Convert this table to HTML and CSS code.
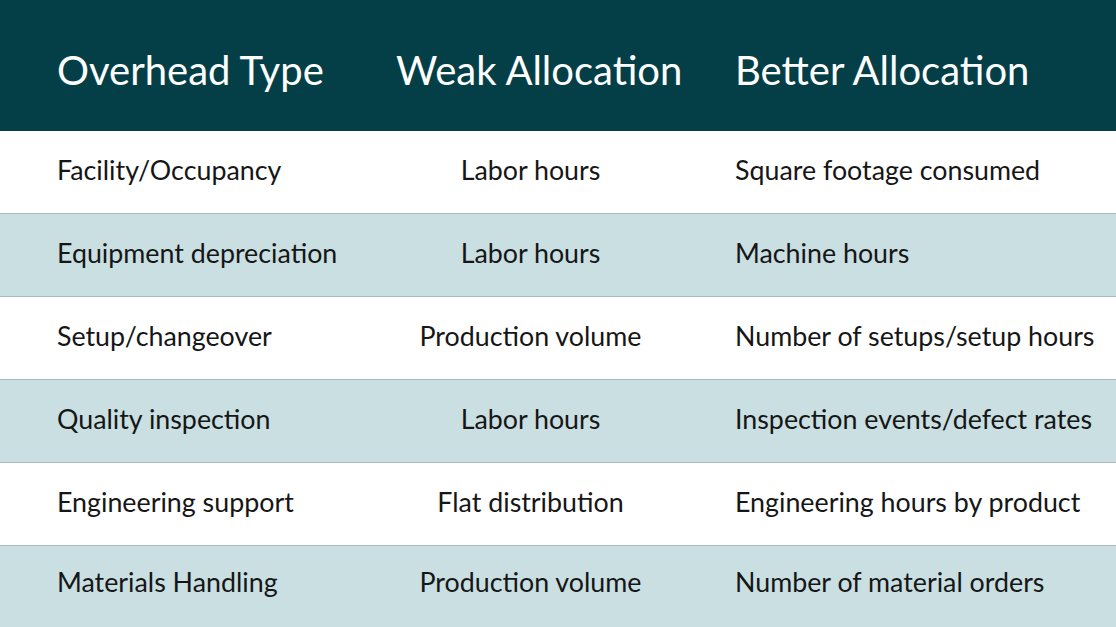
FILE: index.html
```html
<!DOCTYPE html>
<html lang="en">
<head>
<meta charset="utf-8">
<title>Overhead Allocation</title>
<link rel="stylesheet" href="styles.css">
</head>
<body>
<div class="table">
  <div class="row head">
    <div class="cell c1">Overhead Type</div>
    <div class="cell c2">Weak Allocation</div>
    <div class="cell c3">Better Allocation</div>
  </div>
  <div class="row">
    <div class="cell c1">Facility/Occupancy</div>
    <div class="cell c2">Labor hours</div>
    <div class="cell c3">Square footage consumed</div>
  </div>
  <div class="row alt">
    <div class="cell c1">Equipment depreciation</div>
    <div class="cell c2">Labor hours</div>
    <div class="cell c3">Machine hours</div>
  </div>
  <div class="row">
    <div class="cell c1">Setup/changeover</div>
    <div class="cell c2">Production volume</div>
    <div class="cell c3">Number of setups/setup hours</div>
  </div>
  <div class="row alt">
    <div class="cell c1">Quality inspection</div>
    <div class="cell c2">Labor hours</div>
    <div class="cell c3">Inspection events/defect rates</div>
  </div>
  <div class="row">
    <div class="cell c1">Engineering support</div>
    <div class="cell c2">Flat distribution</div>
    <div class="cell c3">Engineering hours by product</div>
  </div>
  <div class="row alt last">
    <div class="cell c1">Materials Handling</div>
    <div class="cell c2">Production volume</div>
    <div class="cell c3">Number of material orders</div>
  </div>
</div>
</body>
</html>
```
FILE: styles.css
```css
html, body {
  margin: 0;
  padding: 0;
  background: #ffffff;
}
body {
  font-family: "Lato", "Open Sans", sans-serif;
  color: #161616;
  width: 1116px;
  height: 627px;
  overflow: hidden;
}
.table {
  display: flex;
  flex-direction: column;
}
.row {
  display: grid;
  grid-template-columns: 396px 339px 1fr;
  height: 82px;
  align-items: center;
  border-bottom: 1px solid #a7bcc0;
  background: #ffffff;
}
.row.alt {
  background: #c9dfe2;
}
.row.last {
  border-bottom: none;
}
.row.head {
  height: 131px;
  background: #043f48;
  color: #ffffff;
  border-bottom: none;
}
.cell {
  font-size: 26.8px;
  white-space: nowrap;
  padding-bottom: 5px;
}
.row.last .cell {
  padding-bottom: 11px;
}
.c1 {
  padding-left: 57px;
}
.c2 {
  text-align: center;
  padding-right: 70px;
}
.c3 {
  padding-left: 0;
}
.head .cell {
  font-size: 40px;
  padding-top: 8px;
  padding-bottom: 0;
}
.head .c2 {
  text-align: left;
  padding-right: 0;
}
```
